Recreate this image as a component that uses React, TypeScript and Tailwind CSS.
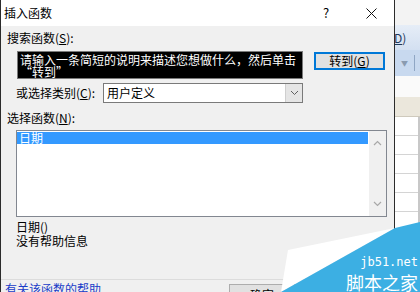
export default function App() {
  return (
    <div className="relative flex h-[292px] w-[420px] overflow-hidden bg-white font-['Noto_Sans_CJK_SC',sans-serif] text-[12px] leading-[14px] text-black">
      {/* dialog */}
      <div className="flex w-[395px] shrink-0 flex-col border-x border-[#2b2b2b] bg-[#f0f0f0]">
        <div className="flex h-[26px] shrink-0 items-center bg-white pl-[3px]">
          <span>插入函数</span>
          <span className="ml-auto flex w-[46px] justify-center text-[13px]">?</span>
          <span className="flex w-[45px] justify-center">
            <svg width="11" height="11" viewBox="0 0 11 11">
              <path d="M0.5 0.5 L10.5 10.5 M10.5 0.5 L0.5 10.5" stroke="#111" strokeWidth="1" />
            </svg>
          </span>
        </div>

        <div className="mt-[5px] pl-[6px]">
          搜索函数(<span className="underline">S</span>):
        </div>

        <div className="mt-[6px] flex pl-[16px]">
          <div className="flex h-[28px] w-[286px] flex-col border border-[#7a7a7a] bg-black px-[2px] pt-[2px] text-white">
            <div className="h-[12px] leading-[12px]">请输入一条简短的说明来描述您想做什么，然后单击</div>
            <div className="h-[12px] leading-[12px]">“转到”</div>
          </div>
          <button className="ml-[11px] mt-[1px] flex h-[18px] w-[71px] items-center justify-center border-2 border-[#0078d7] bg-[#e1e1e1] leading-[12px]">
            转到(<span className="underline">G</span>)
          </button>
        </div>

        <div className="mt-[4px] flex items-center pl-[15px]">
          <span className="w-[87px]">
            或选择类别(<span className="underline">C</span>):
          </span>
          <div className="flex h-[20px] w-[200px] items-center border border-[#7a7a7a] bg-white">
            <span className="flex-1 pl-[3px]">用户定义</span>
            <span className="flex h-full w-[17px] items-center justify-center border-l border-[#cfcfcf] bg-[#e5e5e5]">
              <svg width="9" height="6" viewBox="0 0 9 6">
                <path d="M1 1 L4.5 4.5 L8 1" fill="none" stroke="#606060" strokeWidth="1" />
              </svg>
            </span>
          </div>
        </div>

        <div className="mt-[8px] pl-[6px]">
          选择函数(<span className="underline">N</span>):
        </div>

        <div className="ml-[15px] mt-[5px] flex h-[87px] w-[371px] shrink-0 border border-[#828790] bg-white">
          <div className="flex-1 pt-[1px]">
            <div className="mr-[1px] h-[12px] bg-[#3399ff] pl-[2px] leading-[12px] text-white">日期</div>
          </div>
          <div className="flex w-[17px] flex-col items-center justify-between bg-[#f0f0f0] py-[9px]">
            <svg width="9" height="6" viewBox="0 0 9 6">
              <path d="M1 5 L4.5 1.5 L8 5" fill="none" stroke="#a8a8a8" strokeWidth="1.2" />
            </svg>
            <svg width="9" height="6" viewBox="0 0 9 6">
              <path d="M1 1 L4.5 4.5 L8 1" fill="none" stroke="#a8a8a8" strokeWidth="1.2" />
            </svg>
          </div>
        </div>

        <div className="mt-[3px] pl-[15px]">
          <div>日期()</div>
          <div>没有帮助信息</div>
        </div>

        <div className="mt-[31px] border-t border-[#dcdcdc]" />
        <div className="flex items-start pl-[4px]">
          <span className="mt-[2px] text-[#1a3cc8]">有关该函数的帮助</span>
          <button className="ml-[128px] mt-[4px] flex h-[22px] w-[66px] items-center justify-center border border-[#adadad] bg-[#e1e1e1]">
            确定
          </button>
          <button className="ml-[8px] mt-[4px] flex h-[22px] w-[66px] items-center justify-center border border-[#adadad] bg-[#e1e1e1]">
            取消
          </button>
        </div>
      </div>

      {/* spreadsheet behind */}
      <div className="flex w-[25px] shrink-0 flex-col overflow-hidden">
        <div className="h-[25px] shrink-0 bg-[#f3f3f3]" />
        <div className="flex h-[25px] shrink-0 items-center bg-gradient-to-b from-[#e6edf7] to-[#d3e0f1] text-[#1e395b]">
          <span className="-ml-[1px]">
            <span className="underline">D</span>)
          </span>
        </div>
        <div className="flex h-[26px] shrink-0 items-center bg-[#c8d9ef]">
          <span className="ml-[6px] text-[7px] text-[#8a9bb0]">▼</span>
          <span className="ml-[6px] h-[16px] w-px bg-[#8fa6c4]" />
        </div>
        <div className="h-[21px] shrink-0 bg-[#fafafa]" />
        <div className="h-[20px] shrink-0 border-b border-[#cfcabd] bg-[#ebe7dc]" />
        <div className="flex flex-1 flex-col border-r-[2px] border-[#c8c8c8] bg-white">
          <div className="h-[19px] shrink-0 border-b border-[#d4d4d4]" />
          <div className="h-[19px] shrink-0 border-b border-[#d4d4d4]" />
          <div className="h-[19px] shrink-0 border-b border-[#d4d4d4]" />
          <div className="h-[19px] shrink-0 border-b border-[#d4d4d4]" />
          <div className="h-[19px] shrink-0 border-b border-[#d4d4d4]" />
          <div className="h-[19px] shrink-0 border-b border-[#d4d4d4]" />
          <div className="h-[19px] shrink-0 border-b border-[#d4d4d4]" />
          <div className="h-[19px] shrink-0 border-b border-[#d4d4d4]" />
        </div>
      </div>

      {/* watermark */}
      <svg className="absolute left-[280px] top-[222px]" width="140" height="70" viewBox="0 0 140 70">
        <polygon points="8,28 115,6 1,70" fill="#ffffff" />
        <polygon points="115,6 140,0 140,70 1,70" fill="#3cafe3" />
      </svg>
      <div className="absolute right-[2px] top-[254px] font-['DejaVu_Sans_Mono',monospace] text-[12px] leading-[16px] text-white">
        jb51.net
      </div>
      <div className="absolute right-[2px] top-[271px] text-[18px] leading-[22px] text-white">脚本之家</div>
    </div>
  )
}
